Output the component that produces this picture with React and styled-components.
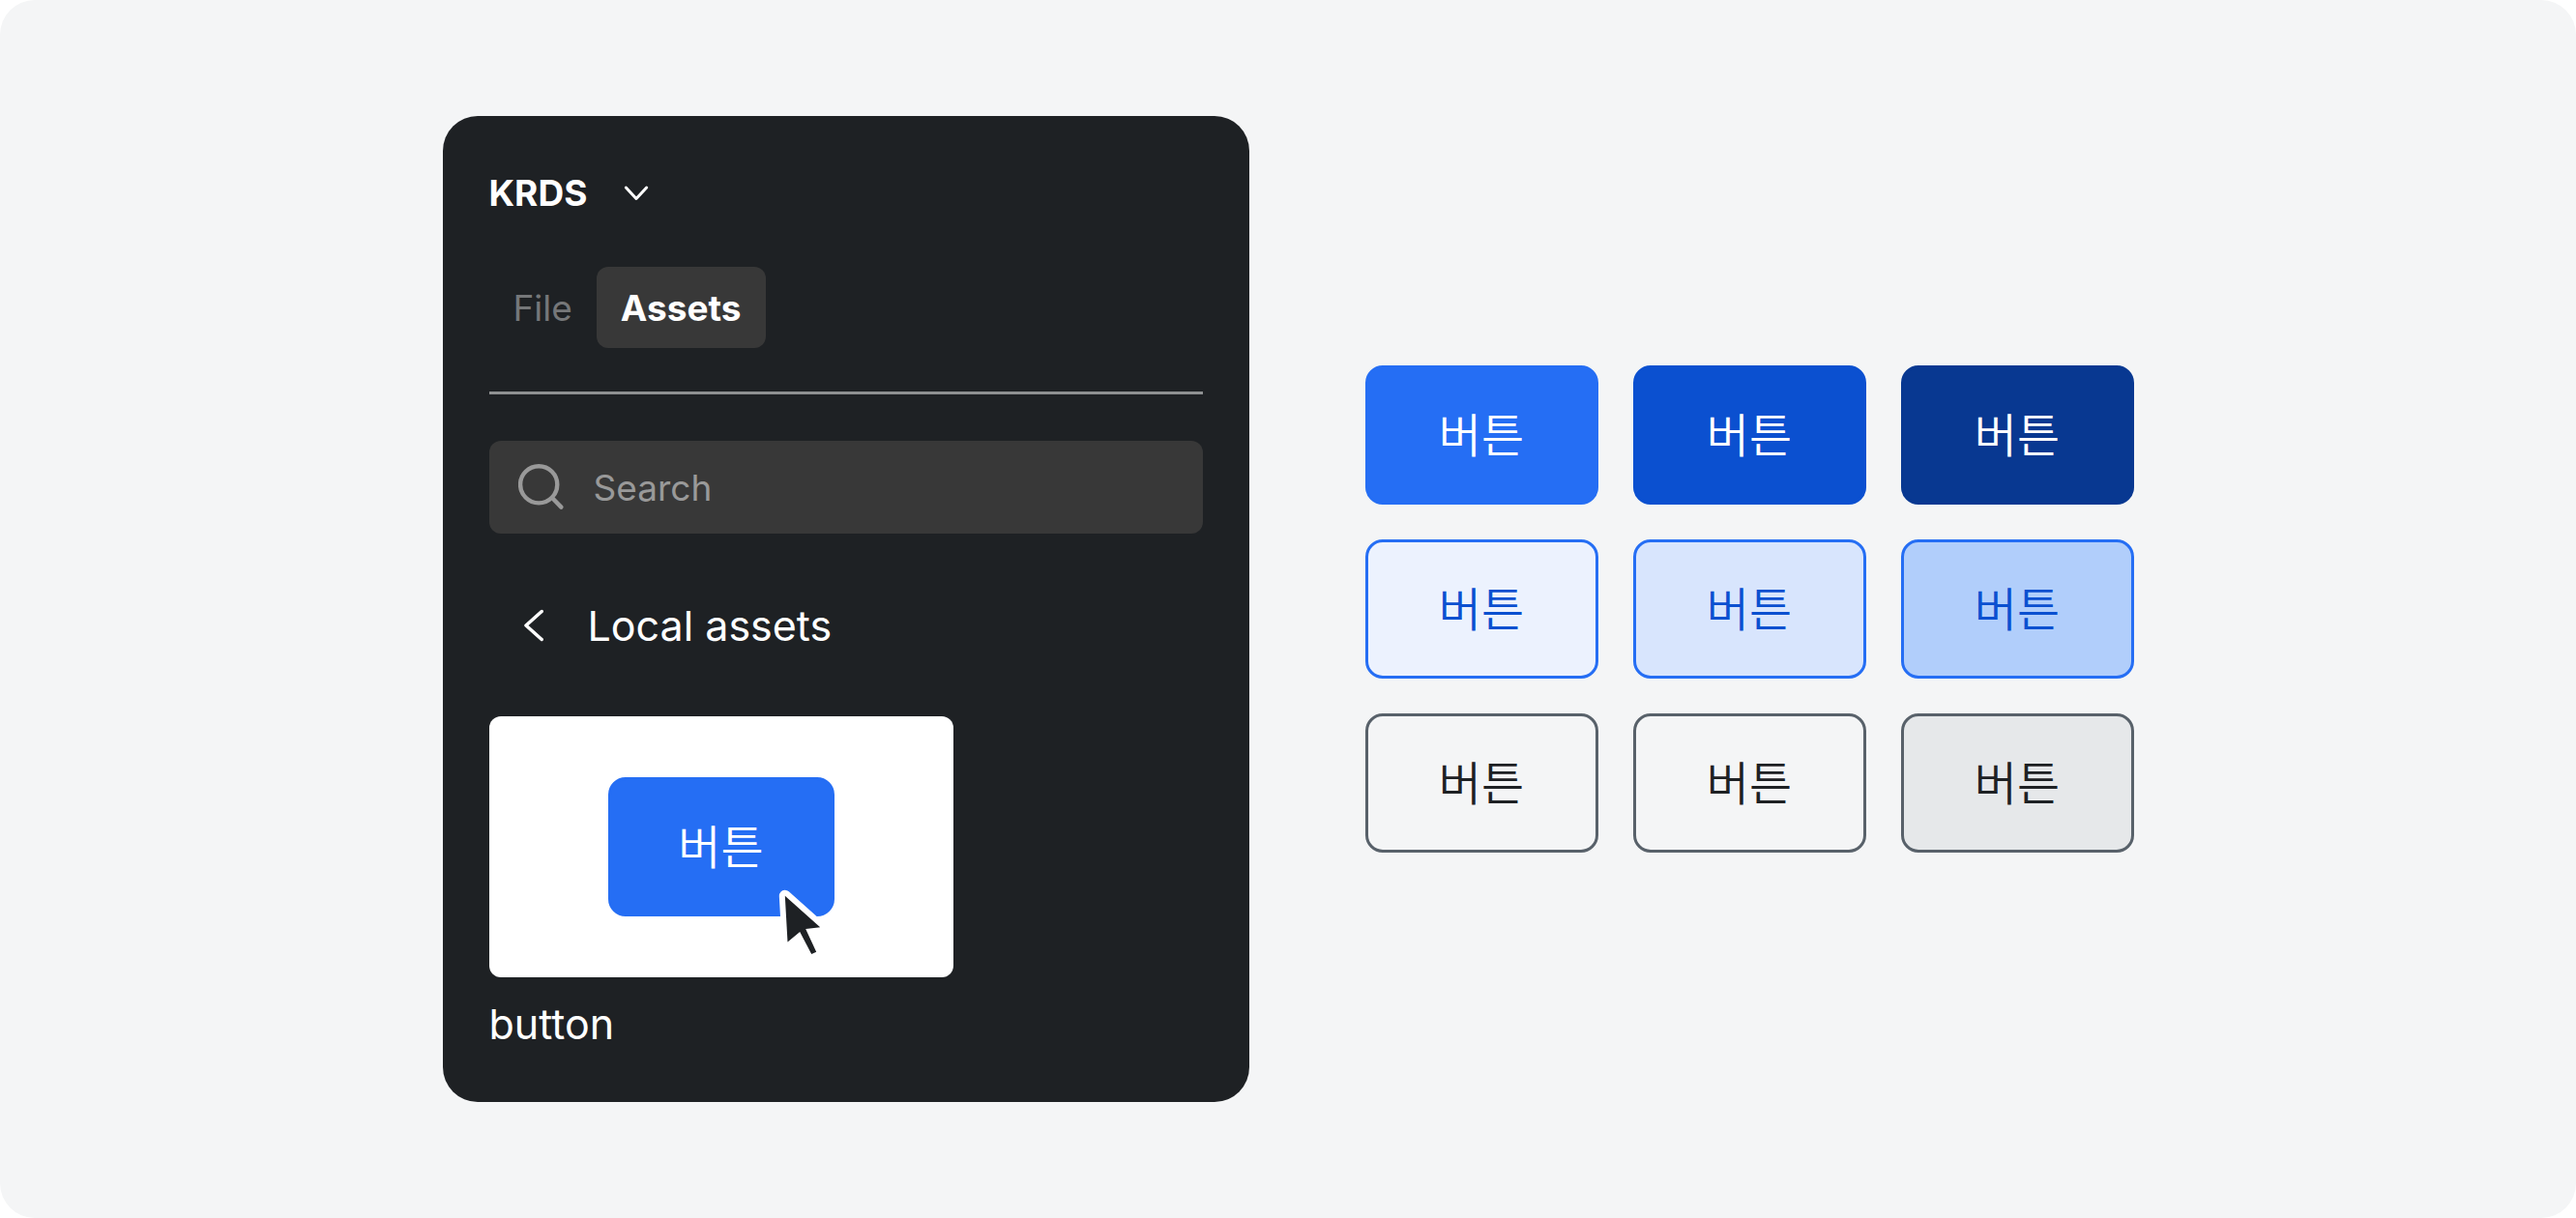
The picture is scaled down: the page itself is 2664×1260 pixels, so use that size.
import React, { useState } from "react";
import styled, { createGlobalStyle } from "styled-components";

const GlobalStyle = createGlobalStyle`
  *, *::before, *::after { box-sizing: border-box; }
  body {
    margin: 0;
    background: #ffffff;
    font-family: Inter, "Noto Sans CJK KR", sans-serif;
    color: #1e2124;
  }
  button, input { font: inherit; color: inherit; }
`;

const Stage = styled.main`
  min-height: 100vh;
  display: flex;
  flex-wrap: wrap;
  align-items: center;
  justify-content: center;
  gap: 48px 120px;
  padding: 48px;
  background: #f4f5f6;
  border-radius: 36px;
`;

const Panel = styled.section`
  flex: 0 1 834px;
  min-width: 0;
  display: flex;
  flex-direction: column;
  padding: 48px;
  border-radius: 36px;
  background: #1e2124;
  color: #ffffff;
`;

const FileMenu = styled.button`
  align-self: flex-start;
  display: flex;
  align-items: center;
  gap: 36px;
  height: 63px;
  padding: 0;
  border: 0;
  background: none;
  font-size: 37px;
  font-weight: 700;
  cursor: pointer;
`;

const Tabs = styled.div`
  display: flex;
  margin-top: 45px;
  padding-bottom: 45px;
  border-bottom: 3px solid #8e9091;
`;

const Tab = styled.button`
  height: 84px;
  padding: 0 25px;
  border: 0;
  border-radius: 12px;
  font-size: 37px;
  cursor: pointer;
  background: ${(p) => (p.$active ? "#383838" : "transparent")};
  color: ${(p) => (p.$active ? "#ffffff" : "#757779")};
  font-weight: ${(p) => (p.$active ? 700 : 400)};
`;

const SearchField = styled.label`
  display: flex;
  align-items: center;
  gap: 30px;
  height: 96px;
  margin-top: 48px;
  padding: 0 30px;
  border-radius: 12px;
  background: #383838;
  color: #999999;
`;

const SearchInput = styled.input`
  flex: 1;
  min-width: 0;
  padding: 0;
  border: 0;
  outline: 0;
  background: transparent;
  font-size: 37px;

  &::placeholder {
    color: #999999;
    opacity: 1;
  }
`;

const BackLink = styled.button`
  align-self: flex-start;
  display: flex;
  align-items: center;
  gap: 42px;
  height: 93px;
  margin-top: 48px;
  padding: 0 0 0 36px;
  border: 0;
  background: none;
  font-size: 43px;
  cursor: pointer;
`;

const Asset = styled.figure`
  display: flex;
  flex-direction: column;
  gap: 15px;
  margin: 48px 0 0;
`;

const Preview = styled.div`
  display: flex;
  align-items: center;
  justify-content: center;
  width: 100%;
  max-width: 480px;
  height: 270px;
  border-radius: 12px;
  background: #ffffff;
`;

const AssetName = styled.figcaption`
  font-size: 43px;
  line-height: 66px;
`;

const SampleHolder = styled.div`
  position: relative;
  width: 234px;
  display: grid;
`;

const Pointer = styled.svg`
  position: absolute;
  right: 7px;
  bottom: -48px;
`;

const Variants = styled.section`
  flex: 0 1 795px;
  min-width: 0;
  display: grid;
  grid-template-columns: repeat(3, 1fr);
  gap: 36px;
`;

const Button = styled.button`
  height: 144px;
  padding: 0 0 6px;
  border: 3px solid ${(p) => p.$border};
  border-radius: 18px;
  background: ${(p) => p.$fill};
  color: ${(p) => p.$text};
  font-family: "Noto Sans CJK KR", sans-serif;
  font-size: 48px;
  font-weight: 350;
  line-height: 72px;
  cursor: pointer;
`;

const variants = [
  { id: "primary", fill: "#256ef4", border: "#256ef4", text: "#ffffff" },
  { id: "primary-hover", fill: "#0b50d0", border: "#0b50d0", text: "#ffffff" },
  { id: "primary-pressed", fill: "#083891", border: "#083891", text: "#ffffff" },
  { id: "secondary", fill: "#ecf2fe", border: "#256ef4", text: "#0b50d0" },
  { id: "secondary-hover", fill: "#d8e5fd", border: "#256ef4", text: "#0b50d0" },
  { id: "secondary-pressed", fill: "#b1cefb", border: "#256ef4", text: "#0b50d0" },
  { id: "tertiary", fill: "#f4f5f6", border: "#58616a", text: "#1e2124" },
  { id: "tertiary-hover", fill: "#f4f5f6", border: "#58616a", text: "#1e2124" },
  { id: "tertiary-pressed", fill: "#e6e8ea", border: "#58616a", text: "#1e2124" },
];

const ChevronDown = () => (
  <svg width="30" height="24" viewBox="0 0 30 24" fill="none" stroke="currentColor" strokeWidth="3" strokeLinecap="round" strokeLinejoin="round" aria-hidden="true">
    <path d="M4.3 6L15 17.5L25.7 6" />
  </svg>
);

const ChevronLeft = () => (
  <svg width="24" height="36" viewBox="0 0 24 36" fill="none" stroke="currentColor" strokeWidth="3.5" strokeLinecap="round" strokeLinejoin="round" aria-hidden="true">
    <path d="M18.2 3.5L2 18l16.2 14.5" />
  </svg>
);

const SearchIcon = () => (
  <svg width="48" height="48" viewBox="0 0 48 48" fill="none" stroke="currentColor" strokeWidth="4.4" strokeLinecap="round" aria-hidden="true">
    <circle cx="21.2" cy="21.3" r="19.1" />
    <path d="M36 36l8.4 8.6" />
  </svg>
);

const Cursor = () => (
  <Pointer width="60" height="78" viewBox="0 0 60 78" aria-hidden="true">
    <path
      d="M15.8 8.7L18.5 56.5L31.2 46L43.2 69L48.2 66.7L37.2 43L52.2 41.3Z"
      fill="#ffffff"
      stroke="#ffffff"
      strokeWidth="12"
      strokeLinejoin="round"
    />
    <path d="M15.8 8.7L18.5 56.5L31.2 46L43.2 69L48.2 66.7L37.2 43L52.2 41.3Z" fill="#1e2124" />
  </Pointer>
);

export default function App() {
  const [tab, setTab] = useState("Assets");
  return (
    <>
      <GlobalStyle />
      <Stage>
        <Panel aria-label="KRDS">
          <FileMenu type="button">
            KRDS
            <ChevronDown />
          </FileMenu>
          <Tabs role="tablist">
            {["File", "Assets"].map((name) => (
              <Tab key={name} type="button" role="tab" aria-selected={tab === name} $active={tab === name} onClick={() => setTab(name)}>
                {name}
              </Tab>
            ))}
          </Tabs>
          <SearchField>
            <SearchIcon />
            <SearchInput type="text" placeholder="Search" aria-label="Search" />
          </SearchField>
          <BackLink type="button">
            <ChevronLeft />
            Local assets
          </BackLink>
          <Asset>
            <Preview>
              <SampleHolder>
                <Button type="button" $fill="#256ef4" $border="#256ef4" $text="#ffffff">
                  버튼
                </Button>
                <Cursor />
              </SampleHolder>
            </Preview>
            <AssetName>button</AssetName>
          </Asset>
        </Panel>
        <Variants aria-label="Button variants">
          {variants.map((v) => (
            <Button key={v.id} type="button" $fill={v.fill} $border={v.border} $text={v.text}>
              버튼
            </Button>
          ))}
        </Variants>
      </Stage>
    </>
  );
}
